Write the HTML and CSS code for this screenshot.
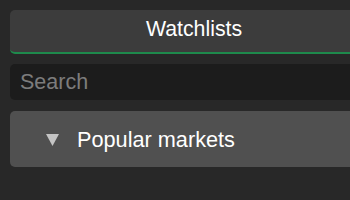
FILE: index.html
```html
<!DOCTYPE html>
<html>
<head>
<meta charset="utf-8">
<link rel="stylesheet" href="styles.css">
</head>
<body>
<div class="widget">
  <div class="tab">Watchlists</div>
  <input class="search" type="text" placeholder="Search">
  <div class="panel">
    <svg class="caret" width="13" height="12" viewBox="0 0 13 12"><polygon points="0,0 13,0 6.5,12" fill="#c4c4c4"/></svg>
    <span class="panel-title">Popular markets</span>
  </div>
</div>
</body>
</html>
```

FILE: styles.css
```css
html, body {
  margin: 0;
  padding: 0;
  background: #282828;
  overflow: hidden;
}
body {
  padding: 10px 0 10px 10px;
  font-family: "Liberation Sans", Arial, sans-serif;
  font-size: 21.3px;
}
.widget {
  display: flex;
  flex-direction: column;
}
.tab {
  box-sizing: border-box;
  height: 44px;
  padding: 7px 0 0 28px;
  line-height: 24px;
  text-align: center;
  color: #ffffff;
  background: #3c3c3c;
  border-bottom: 2px solid #1e8a4c;
  border-radius: 5px 0 0 5px;
}
.search {
  box-sizing: border-box;
  width: 100%;
  margin: 10px 0 0 0;
  height: 36px;
  padding: 0 0 0 10px;
  border: none;
  outline: none;
  border-radius: 5px 0 0 5px;
  background: #1c1c1c;
  color: #ddd;
  font-family: inherit;
  font-size: 21.5px;
  line-height: 24px;
}
.search::placeholder {
  color: #7c7c7c;
}
.panel {
  box-sizing: border-box;
  margin-top: 11px;
  height: 56px;
  padding-left: 36px;
  display: flex;
  align-items: center;
  gap: 18px;
  background: #505050;
  border-radius: 5px 0 0 5px;
}
.caret {
  display: block;
  margin-top: 2px;
}
.panel-title {
  color: #ffffff;
  font-size: 21.7px;
  line-height: 24px;
  margin-top: 1px;
}
```
